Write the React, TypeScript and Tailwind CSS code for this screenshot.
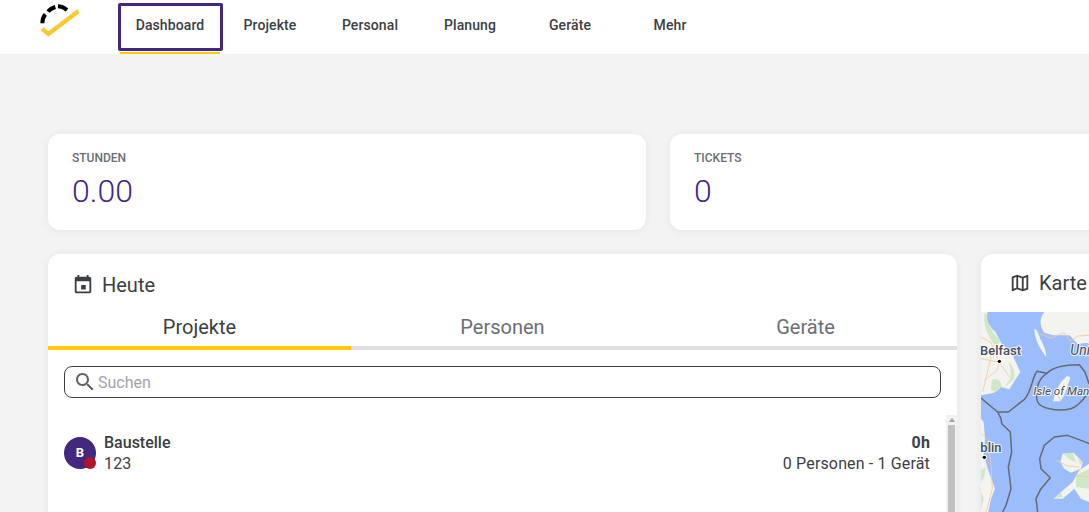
const navItems = ['Dashboard', 'Projekte', 'Personal', 'Planung', 'Geräte', 'Mehr'];

function Logo() {
  return (
    <svg width="60" height="45" viewBox="0 0 180 135" className="absolute top-0 left-[30px]">
      <path d="M36 86 L55 102 L142 36 L146 35" fill="none" stroke="#fcc931" strokeWidth="13" />
      <path d="M37 70 C37 58 40 50 46 43" fill="none" stroke="#000" strokeWidth="12" />
      <path d="M54 35 C60 27 66 24 76 21" fill="none" stroke="#000" strokeWidth="12" />
      <path d="M84 19 C94 19 102 23 111 30" fill="none" stroke="#000" strokeWidth="12" />
    </svg>
  );
}

function EventIcon() {
  return (
    <svg viewBox="0 0 24 24" className="mr-[8px] h-[22px] w-[22px] fill-[#3c4043]">
      <path d="M15 12h-5v5h5v-5zM16 1v2H8V1H6v2H5c-1.11 0-1.99.9-1.99 2L3 19c0 1.1.89 2 2 2h14c1.1 0 2-.9 2-2V5c0-1.1-.9-2-2-2h-1V1h-2zm3 18H5V8h14v11z" />
    </svg>
  );
}

function SearchIcon() {
  return (
    <svg viewBox="0 0 24 24" className="mr-px h-6 w-6 fill-[#5f6368]">
      <path d="M15.5 14h-.79l-.28-.27C15.41 12.59 16 11.11 16 9.5 16 5.91 13.09 3 9.5 3S3 5.91 3 9.5 5.91 16 9.5 16c1.61 0 3.09-.59 4.23-1.57l.27.28v.79l5 4.99L20.49 19l-4.99-5zm-6 0C7.01 14 5 11.99 5 9.5S7.01 5 9.5 5 14 7.01 14 9.5 11.99 14 9.5 14z" />
    </svg>
  );
}

function MapOutlineIcon() {
  return (
    <svg viewBox="0 0 24 24" className="mr-[8px] h-[22px] w-[22px] fill-[#3c4043]">
      <path d="M20.5 3l-.16.03L15 5.1 9 3 3.36 4.9c-.21.07-.36.25-.36.48V20.5c0 .28.22.5.5.5l.16-.03L9 18.9l6 2.1 5.64-1.9c.21-.07.36-.25.36-.48V3.5c0-.28-.22-.5-.5-.5zM10 5.47l4 1.4v11.66l-4-1.4V5.47zm-5 .99l3-1.01v11.7l-3 1.16V6.46zm14 11.08l-3 1.01V6.86l3-1.16v11.84z" />
    </svg>
  );
}

function TopNav() {
  return (
    <nav className="relative flex h-[54px] bg-white pl-[120px] text-[14px] font-medium tracking-[0.1px] text-[#3c4043]">
      <Logo />
      {navItems.map((item, i) => (
        <a key={item} className="relative flex w-[100px] items-center justify-center pb-[4px]">
          {item}
          {i === 0 && (
            <>
              <span className="absolute top-[3px] right-[-3px] left-[-2px] h-[48px] rounded-[2px] border-[3px] border-[#42297f]" />
              <span className="absolute right-0 bottom-0 left-0 h-[2px] bg-[#ffcb05]" />
            </>
          )}
        </a>
      ))}
    </nav>
  );
}

function StatCard({ label, value }: { label: string; value: string }) {
  return (
    <div className="h-[96px] rounded-xl bg-white pt-[17px] pl-6 shadow-[0_1px_8px_rgba(0,0,0,0.06)]">
      <div className="text-[12px] leading-[14px] font-medium text-[#6b6f73]">{label}</div>
      <div className="mt-[7px] text-[32px] leading-[38px] font-light text-[#42297f]">{value}</div>
    </div>
  );
}

function MapDrawing() {
  const halo = { paintOrder: 'stroke' as const, stroke: '#ffffff', strokeOpacity: 0.8, strokeWidth: 6 };
  return (
    <svg viewBox="0 0 324 600" className="block h-[200px] w-[108px] bg-[#9cbdfb]">
      {/* Northern Ireland */}
      <path d="M0 0 H20 C12 20 22 40 42 58 L62 95 L95 130 L118 180 L102 205 L85 232 L50 222 L40 242 L0 250 Z" fill="#f3f3ef" />
      <path d="M10 5 H20 C14 25 28 50 58 90 L42 102 C24 72 6 45 10 5 Z" fill="#cfe8c5" />
      <path d="M32 205 C45 195 62 205 62 225 L45 240 L30 235 Z" fill="#cfe8c5" />
      <path d="M82 150 C100 165 106 190 96 205 L70 225 L85 205 C92 185 90 170 82 150 Z" fill="#cfe8c5" />
      <path d="M0 75 L30 92 L55 150 L48 175 L10 205 M55 150 L85 195 M0 140 L50 150 M30 135 L5 240" fill="none" stroke="#f5c89a" strokeWidth="2.5" />
      {/* Scotland coast */}
      <path d="M190 0 H324 V92 L290 95 L265 70 L215 70 L190 62 C178 45 172 22 190 0 Z" fill="#f3f3ef" />
      <path d="M160 50 C172 52 172 70 182 88 C190 105 196 120 196 134 C185 122 160 85 160 50 Z" fill="#f3f3ef" />
      <path d="M178 66 L210 78 L250 62 L268 88 L290 72 L324 70" fill="none" stroke="#f5c89a" strokeWidth="2.5" />
      {/* Isle of Man */}
      <path d="M258 192 L268 196 L262 215 L250 250 L238 268 L216 268 L226 235 L240 210 Z" fill="#f3f3ef" />
      <path d="M250 215 L232 250 L238 268" fill="none" stroke="#f5c89a" strokeWidth="2.5" />
      {/* Dublin coast */}
      <path d="M0 320 L8 330 L12 380 L8 425 L20 470 L42 530 L30 560 L22 600 H0 Z" fill="#f3f3ef" />
      <path d="M0 475 L15 465 L10 495 L0 510 Z M0 540 L8 560 L0 590 Z" fill="#cfe8c5" />
      <path d="M0 365 L22 385 L30 460 L34 530 L15 600" fill="none" stroke="#f5c89a" strokeWidth="2.5" />
      {/* Anglesey and Wales */}
      <path d="M245 425 L278 422 L305 450 L300 470 L270 482 L250 470 L238 450 Z" fill="#f3f3ef" />
      <path d="M248 425 L275 422 L285 450 L262 440 Z M290 440 L305 450 L298 458 Z" fill="#cfe8c5" />
      <path d="M226 445 L260 462 L295 465" fill="none" stroke="#f5c89a" strokeWidth="2.5" />
      <path d="M324 455 L295 475 L275 510 L240 540 L218 560 L245 560 L280 530 L300 560 L324 570 Z" fill="#f3f3ef" />
      <path d="M324 470 L285 490 L285 525 L324 530 Z M240 540 L222 558 L245 555 Z" fill="#cfe8c5" />
      <path d="M295 475 L285 490 L324 495" fill="none" stroke="#f5c89a" strokeWidth="2.5" />
      {/* Sea borders */}
      <g fill="none" stroke="#666a70" strokeWidth="4.5" strokeLinejoin="round">
        <path d="M0 258 L50 300 L82 300 L130 262 C150 245 155 190 168 178 L198 184 C215 165 250 158 295 158 L312 180 L324 215" />
        <path d="M198 184 C170 200 160 240 170 270 C180 290 230 300 270 290 C290 285 310 260 324 240" />
        <path d="M50 300 L60 320 L62 335 L88 360 L92 420 L82 465 L90 530 L75 580 L65 600" />
        <path d="M324 395 L300 385 L260 370 L220 375 L190 400 L176 440 L180 470 L208 497 L180 530 L165 560 L170 600" />
      </g>
      <g fontFamily="Roboto, sans-serif" fill="#4a4d55">
        <text x="-3" y="128" fontSize="39" fontWeight="500" style={halo}>Belfast</text>
        <text x="-2" y="420" fontSize="39" fontWeight="500" style={halo}>blin</text>
        <text x="268" y="130" fontSize="42" fontStyle="italic" style={halo}>Uni</text>
        <text x="157" y="250" fontSize="35" fontStyle="italic" style={halo}>Isle of Man</text>
      </g>
      <circle cx="55" cy="148" r="8" fill="#fff" />
      <circle cx="55" cy="148" r="5" fill="#000" />
      <circle cx="10" cy="436" r="8" fill="#fff" />
      <circle cx="10" cy="436" r="5" fill="#000" />
    </svg>
  );
}

function TodayCard() {
  return (
    <div className="h-[280px] rounded-xl bg-white shadow-[0_1px_8px_rgba(0,0,0,0.06)]">
      <div className="flex h-[61px] items-center pt-[1px] pl-6 text-[20px] text-[#3c4043]">
        <EventIcon />
        Heute
      </div>
      <div className="grid h-[35px] grid-cols-3 text-[20px] leading-[24px] text-[#6b6f73]">
        <div className="border-b-4 border-[#ffcb05] text-center text-[#3c4043]">Projekte</div>
        <div className="border-b-4 border-[#dfdfe6] text-center">Personen</div>
        <div className="border-b-4 border-[#dfdfe6] text-center">Geräte</div>
      </div>
      <div className="mx-4 mt-[16px] flex h-8 items-center rounded-lg border border-[#3c4043] pl-2 text-[16px] text-[#a3a3ad]">
        <SearchIcon />
        <span className="pt-[2px]">Suchen</span>
      </div>
      <div className="relative mt-[17px] flex pr-[27px] pl-4 tracking-[0.15px]">
        <div className="relative mt-[22px] flex h-8 w-8 items-center justify-center rounded-full bg-[#42297f] text-[13px] font-bold text-white">
          B
          <span className="absolute right-0 bottom-0 h-3 w-3 rounded-full bg-[#b1132b]" />
        </div>
        <div className="mt-[17px] ml-2 text-[#3c4043]">
          <div className="text-[16px] leading-[21px] font-medium tracking-normal">Baustelle</div>
          <div className="text-[16px] leading-[21px]">123</div>
        </div>
        <div className="mt-[17px] ml-auto text-right text-[#3c4043]">
          <div className="text-[16px] leading-[21px] font-bold">0h</div>
          <div className="text-[16px] leading-[21px]">0 Personen - 1 Gerät</div>
        </div>
        {/* scrollbar */}
        <div className="absolute top-0 right-0 h-[100px] w-[11px] bg-[#f1f1f1]">
          <div className="mx-auto mt-[3px] h-0 w-0 border-x-[3px] border-b-[4px] border-x-transparent border-b-[#a3a3a3]" />
          <div className="absolute top-[10px] left-[2px] h-[90px] w-[7px] bg-[#c1c1c1]" />
        </div>
      </div>
    </div>
  );
}

export default function App() {
  return (
    <div className="h-[512px] w-[1089px] overflow-hidden bg-[#f3f3f3] font-['Roboto',sans-serif]">
      <TopNav />
      <main className="w-[1268px] pt-[80px] pl-12">
        <div className="grid grid-cols-2 gap-6">
          <StatCard label="STUNDEN" value="0.00" />
          <StatCard label="TICKETS" value="0" />
        </div>
        <div className="mt-6 grid grid-cols-[909px_287px] gap-6">
          <TodayCard />
          <div className="h-[280px] overflow-hidden rounded-xl bg-white shadow-[0_1px_8px_rgba(0,0,0,0.06)]">
            <div className="flex h-[58px] items-center pl-[28px] text-[20px] text-[#3c4043]">
              <MapOutlineIcon />
              Karte
            </div>
            <MapDrawing />
          </div>
        </div>
      </main>
    </div>
  );
}
